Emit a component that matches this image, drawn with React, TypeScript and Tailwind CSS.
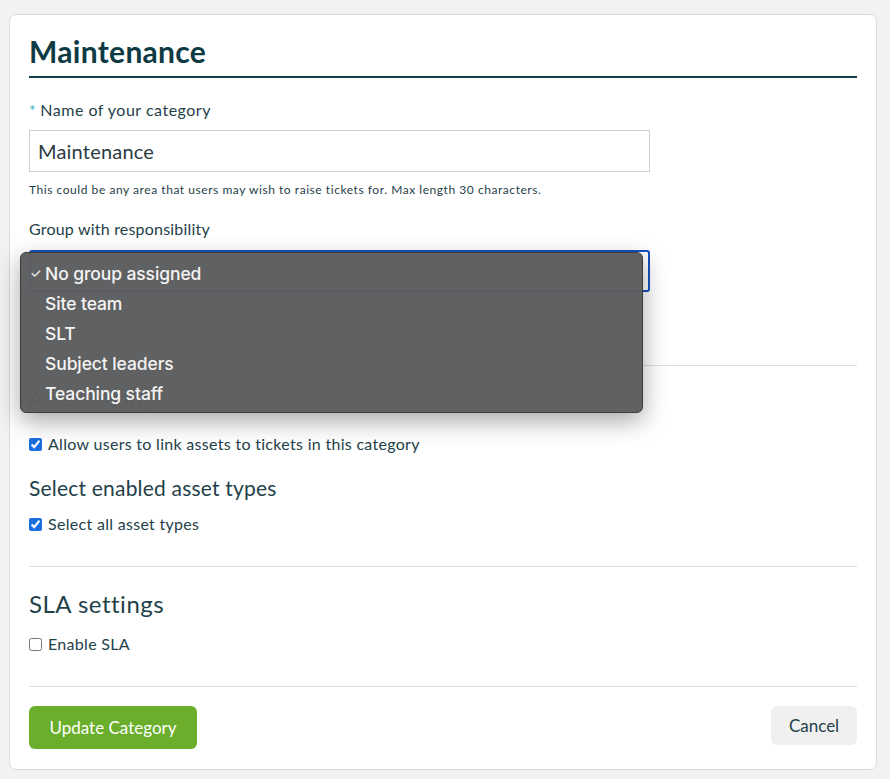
import React from 'react';

const groups = ['No group assigned', 'Site team', 'SLT', 'Subject leaders', 'Teaching staff'];

const Checkbox: React.FC<{ checked?: boolean; label: string }> = ({ checked, label }) => (
  <label className="flex items-center gap-[6px] text-[16px] leading-[20px] tracking-[0.3px] text-[#1f4149]">
    <input type="checkbox" defaultChecked={checked} className="w-[13px] h-[13px] accent-[#1a6fe0] m-0" />
    <span>{label}</span>
  </label>
);

export default function App() {
  return (
    <div className="min-h-screen bg-[#f2f2f2] pt-[14px] pl-[9px] pb-[10px]" style={{ fontFamily: 'Lato, "Open Sans", sans-serif' }}>
      <div className="w-[868px] bg-white border border-[#dcdcdc] rounded-[7px] px-[19px] pt-[19px] pb-[20px]">
        {/* Title */}
        <h1 className="text-[30px] leading-[34px] font-bold tracking-[0.3px] text-[#0e3a44] pb-[8px] border-b-2 border-[#123e47]">
          Maintenance
        </h1>

        {/* Name field */}
        <div className="mt-[22px] text-[16px] leading-[20px] tracking-[0.5px] text-[#1f4149]">
          <span className="text-[#3ab3cc] mr-[4px]">*</span>Name of your category
        </div>
        <input
          type="text"
          defaultValue="Maintenance"
          className="mt-[10px] block w-[621px] h-[42px] border border-[#cfcfcf] px-[8px] text-[20px] tracking-[0.2px] text-[#2b3b3f] outline-none"
        />
        <p className="mt-[10px] text-[12px] leading-[16px] tracking-[0.55px] text-[#1f4149]">
          This could be any area that users may wish to raise tickets for. Max length 30 characters.
        </p>

        {/* Group select */}
        <div className="mt-[21px] text-[16px] leading-[20px] tracking-[0.2px] text-[#1f4149]">Group with responsibility</div>
        <div className="relative mt-[11px]">
          <div className="w-[621px] h-[42px] border-2 border-[#1750bd] rounded-[3px]" />
          <div
            className="absolute left-[-9px] top-[2px] w-[623px] h-[161px] rounded-[6px] bg-[#5d5e5f]/[0.98] border border-[#3d3d3d] shadow-[0_8px_24px_rgba(0,0,0,0.35)] pt-[6px] z-10"
            style={{ fontFamily: 'Inter, Roboto, sans-serif' }}
          >
            {groups.map((g, i) => (
              <div key={g} className="flex items-center h-[30px] text-[17.5px] font-medium text-[#f4f4f4] tracking-[-0.1px]">
                <span className="w-[24px] pl-[9px] text-[13px] text-[#e8e8e8]">{i === 0 ? '✓' : ''}</span>
                <span>{g}</span>
              </div>
            ))}
          </div>
        </div>

        <div className="mt-[73px] h-px bg-[#dedede]" />

        {/* Asset settings (mostly hidden under the open menu) */}
        <h2 className="mt-[21px] text-[22px] leading-[24px] text-[#1f4149]">Asset settings</h2>
        <div className="mt-[23px]">
          <Checkbox checked label="Allow users to link assets to tickets in this category" />
        </div>
        <h2 className="mt-[22px] text-[21px] leading-[24px] tracking-[0.2px] text-[#1f4149]">Select enabled asset types</h2>
        <div className="mt-[14px]">
          <Checkbox checked label="Select all asset types" />
        </div>

        <div className="mt-[32px] h-px bg-[#dedede]" />

        {/* SLA settings */}
        <h2 className="mt-[23px] text-[24px] leading-[28px] tracking-[0.5px] text-[#1f4149]">SLA settings</h2>
        <div className="mt-[16px]">
          <Checkbox label="Enable SLA" />
        </div>

        <div className="mt-[32px] h-px bg-[#dedede]" />

        {/* Actions */}
        <div className="mt-[19px] flex justify-between items-start">
          <button className="h-[43px] w-[168px] rounded-[6px] bg-[#6aae2c] text-white text-[17px]">Update Category</button>
          <button className="h-[39px] w-[86px] rounded-[6px] bg-[#f0f0f0] text-[#1f4149] text-[17px]">Cancel</button>
        </div>
      </div>
    </div>
  );
}
